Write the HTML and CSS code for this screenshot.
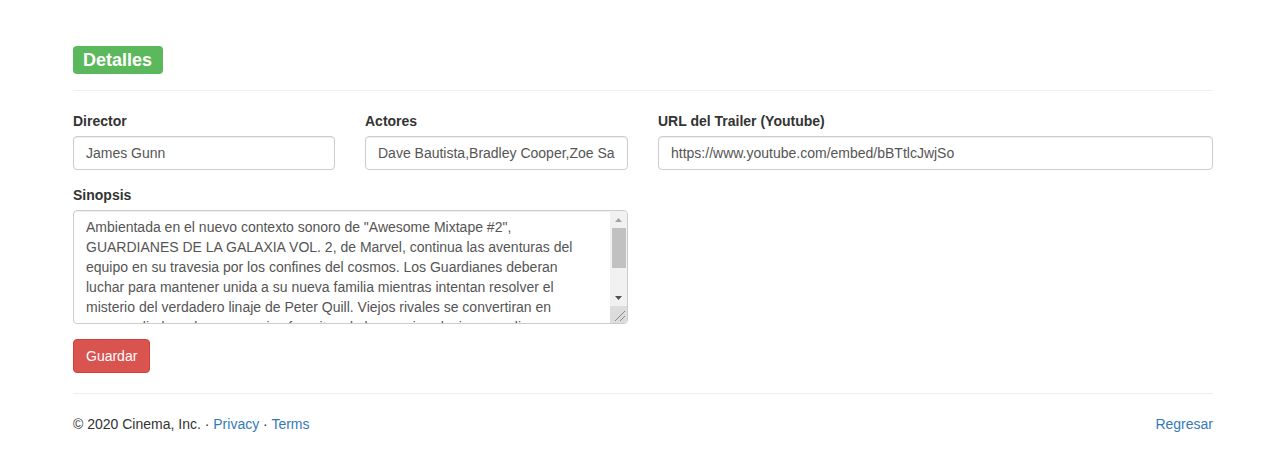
FILE: index.html
```html
<!DOCTYPE html>
<html lang="es">
<head>
<meta charset="utf-8">
<title>Detalles</title>
<link rel="stylesheet" href="styles.css">
</head>
<body>
<div class="container">
  <div class="heading">
    <span class="badge">Detalles</span>
  </div>
  <hr class="rule">
  <form class="form">
    <div class="row">
      <div class="group col-3">
        <label class="label" for="director">Director</label>
        <input class="control" id="director" type="text" value="James Gunn">
      </div>
      <div class="group col-3">
        <label class="label" for="actores">Actores</label>
        <input class="control" id="actores" type="text" value="Dave Bautista,Bradley Cooper,Zoe Saldana,Chris Pratt">
      </div>
      <div class="group col-6">
        <label class="label" for="trailer">URL del Trailer (Youtube)</label>
        <input class="control" id="trailer" type="text" value="https://www.youtube.com/embed/bBTtlcJwjSo">
      </div>
    </div>
    <div class="row">
      <div class="group col-6">
        <label class="label" for="sinopsis">Sinopsis</label>
        <div class="area-box">
          <textarea class="area" id="sinopsis" rows="5">Ambientada en el nuevo contexto sonoro de "Awesome Mixtape #2", GUARDIANES DE LA GALAXIA VOL. 2, de Marvel, continua las aventuras del equipo en su travesia por los confines del cosmos. Los Guardianes deberan luchar para mantener unida a su nueva familia mientras intentan resolver el misterio del verdadero linaje de Peter Quill. Viejos rivales se convertiran en nuevos aliados y los personajes favoritos de los comics clasicos acudiran en ayuda de nuestros heroes a medida que el universo cinematografico de Marvel continua expandiendose.</textarea>
          <div class="sbar" aria-hidden="true">
            <div class="sbtn">
              <svg width="17" height="17" viewBox="0 0 17 17"><polygon points="5,11 12,11 8.5,7" fill="#a3a3a3"/></svg>
            </div>
            <div class="strack"><div class="sthumb"></div></div>
            <div class="sbtn">
              <svg width="17" height="17" viewBox="0 0 17 17"><polygon points="5,7 12,7 8.5,11" fill="#505050"/></svg>
            </div>
            <div class="scorner">
              <svg width="17" height="17" viewBox="0 0 17 17"><path d="M5 15 L15 5 M10 15 L15 10" stroke="#888" stroke-width="1" fill="none"/></svg>
            </div>
          </div>
        </div>
      </div>
    </div>
    <button class="btn" type="button">Guardar</button>
  </form>
  <hr class="rule rule-foot">
  <footer class="footer">
    <p class="copy">&copy; 2020 Cinema, Inc. &middot; <a class="link" href="#">Privacy</a> &middot; <a class="link" href="#">Terms</a></p>
    <a class="link" href="#">Regresar</a>
  </footer>
</div>
</body>
</html>
```

FILE: styles.css
```css
* { box-sizing: border-box; }
html, body { margin: 0; padding: 0; background: #fff; }
body {
  font-family: "Liberation Sans", Arial, Helvetica, sans-serif;
  font-size: 14px;
  line-height: 20px;
  color: #333;
}
.container {
  width: 1140px;
  margin-left: 73px;
}
.heading {
  padding-top: 46px;
  height: 74px;
  display: flex;
  align-items: flex-start;
}
.badge {
  display: inline-block;
  background: #5cb85c;
  color: #fff;
  font-weight: bold;
  font-size: 18px;
  line-height: 18px;
  padding: 5px 11px 5px 10px;
  border-radius: 4px;
  height: 28px;
}
.rule {
  margin: 16px 0 20px;
  border: 0;
  border-top: 1px solid #eee;
  height: 0;
}
.form { margin: 0; }
.row {
  display: flex;
  gap: 30px;
}
.group { margin-bottom: 15px; display: flex; flex-direction: column; }
.col-3 { width: 262px; }
.col-3 + .col-3 { width: 263px; }
.col-6 { width: 555px; }
.label {
  font-weight: bold;
  margin-bottom: 5px;
  display: block;
  line-height: 20px;
}
.control {
  display: block;
  width: 100%;
  height: 34px;
  padding: 6px 12px;
  font-family: inherit;
  font-size: 14px;
  line-height: 20px;
  color: #555;
  background: #fff;
  border: 1px solid #ccc;
  border-radius: 4px;
  box-shadow: inset 0 1px 1px rgba(0,0,0,.075);
  margin: 0;
}
.area-box {
  display: flex;
  height: 114px;
  border: 1px solid #ccc;
  border-radius: 4px;
  box-shadow: inset 0 1px 1px rgba(0,0,0,.075);
  overflow: hidden;
  background: #fff;
}
.area {
  flex: 1;
  min-width: 0;
  height: 112px;
  margin: 0;
  padding: 6px 12px;
  border: 0;
  outline: 0;
  background: transparent;
  resize: none;
  overflow: hidden;
  font-family: inherit;
  font-size: 14px;
  line-height: 20px;
  color: #555;
}
.sbar {
  width: 17px;
  flex: none;
  display: flex;
  flex-direction: column;
  background: #f1f1f1;
}
.sbtn, .scorner { height: 17px; flex: none; }
.sbtn svg, .scorner svg { display: block; }
.strack { flex: 1; }
.sthumb {
  height: 40px;
  margin: 0 1px 0 2px;
  background: #c1c1c1;
}
.scorner { background: #dcdcdc; }
.btn {
  display: block;
  height: 34px;
  padding: 6px 12px;
  font-family: inherit;
  font-size: 14px;
  line-height: 20px;
  color: #fff;
  background: #d9534f;
  border: 1px solid #d43f3a;
  border-radius: 4px;
  width: 77px;
}
.rule-foot { margin: 20px 0 20px; }
.footer {
  display: flex;
  justify-content: space-between;
  align-items: flex-start;
}
.copy { margin: 0 0 10px; }
.link { color: #337ab7; text-decoration: none; }
```
